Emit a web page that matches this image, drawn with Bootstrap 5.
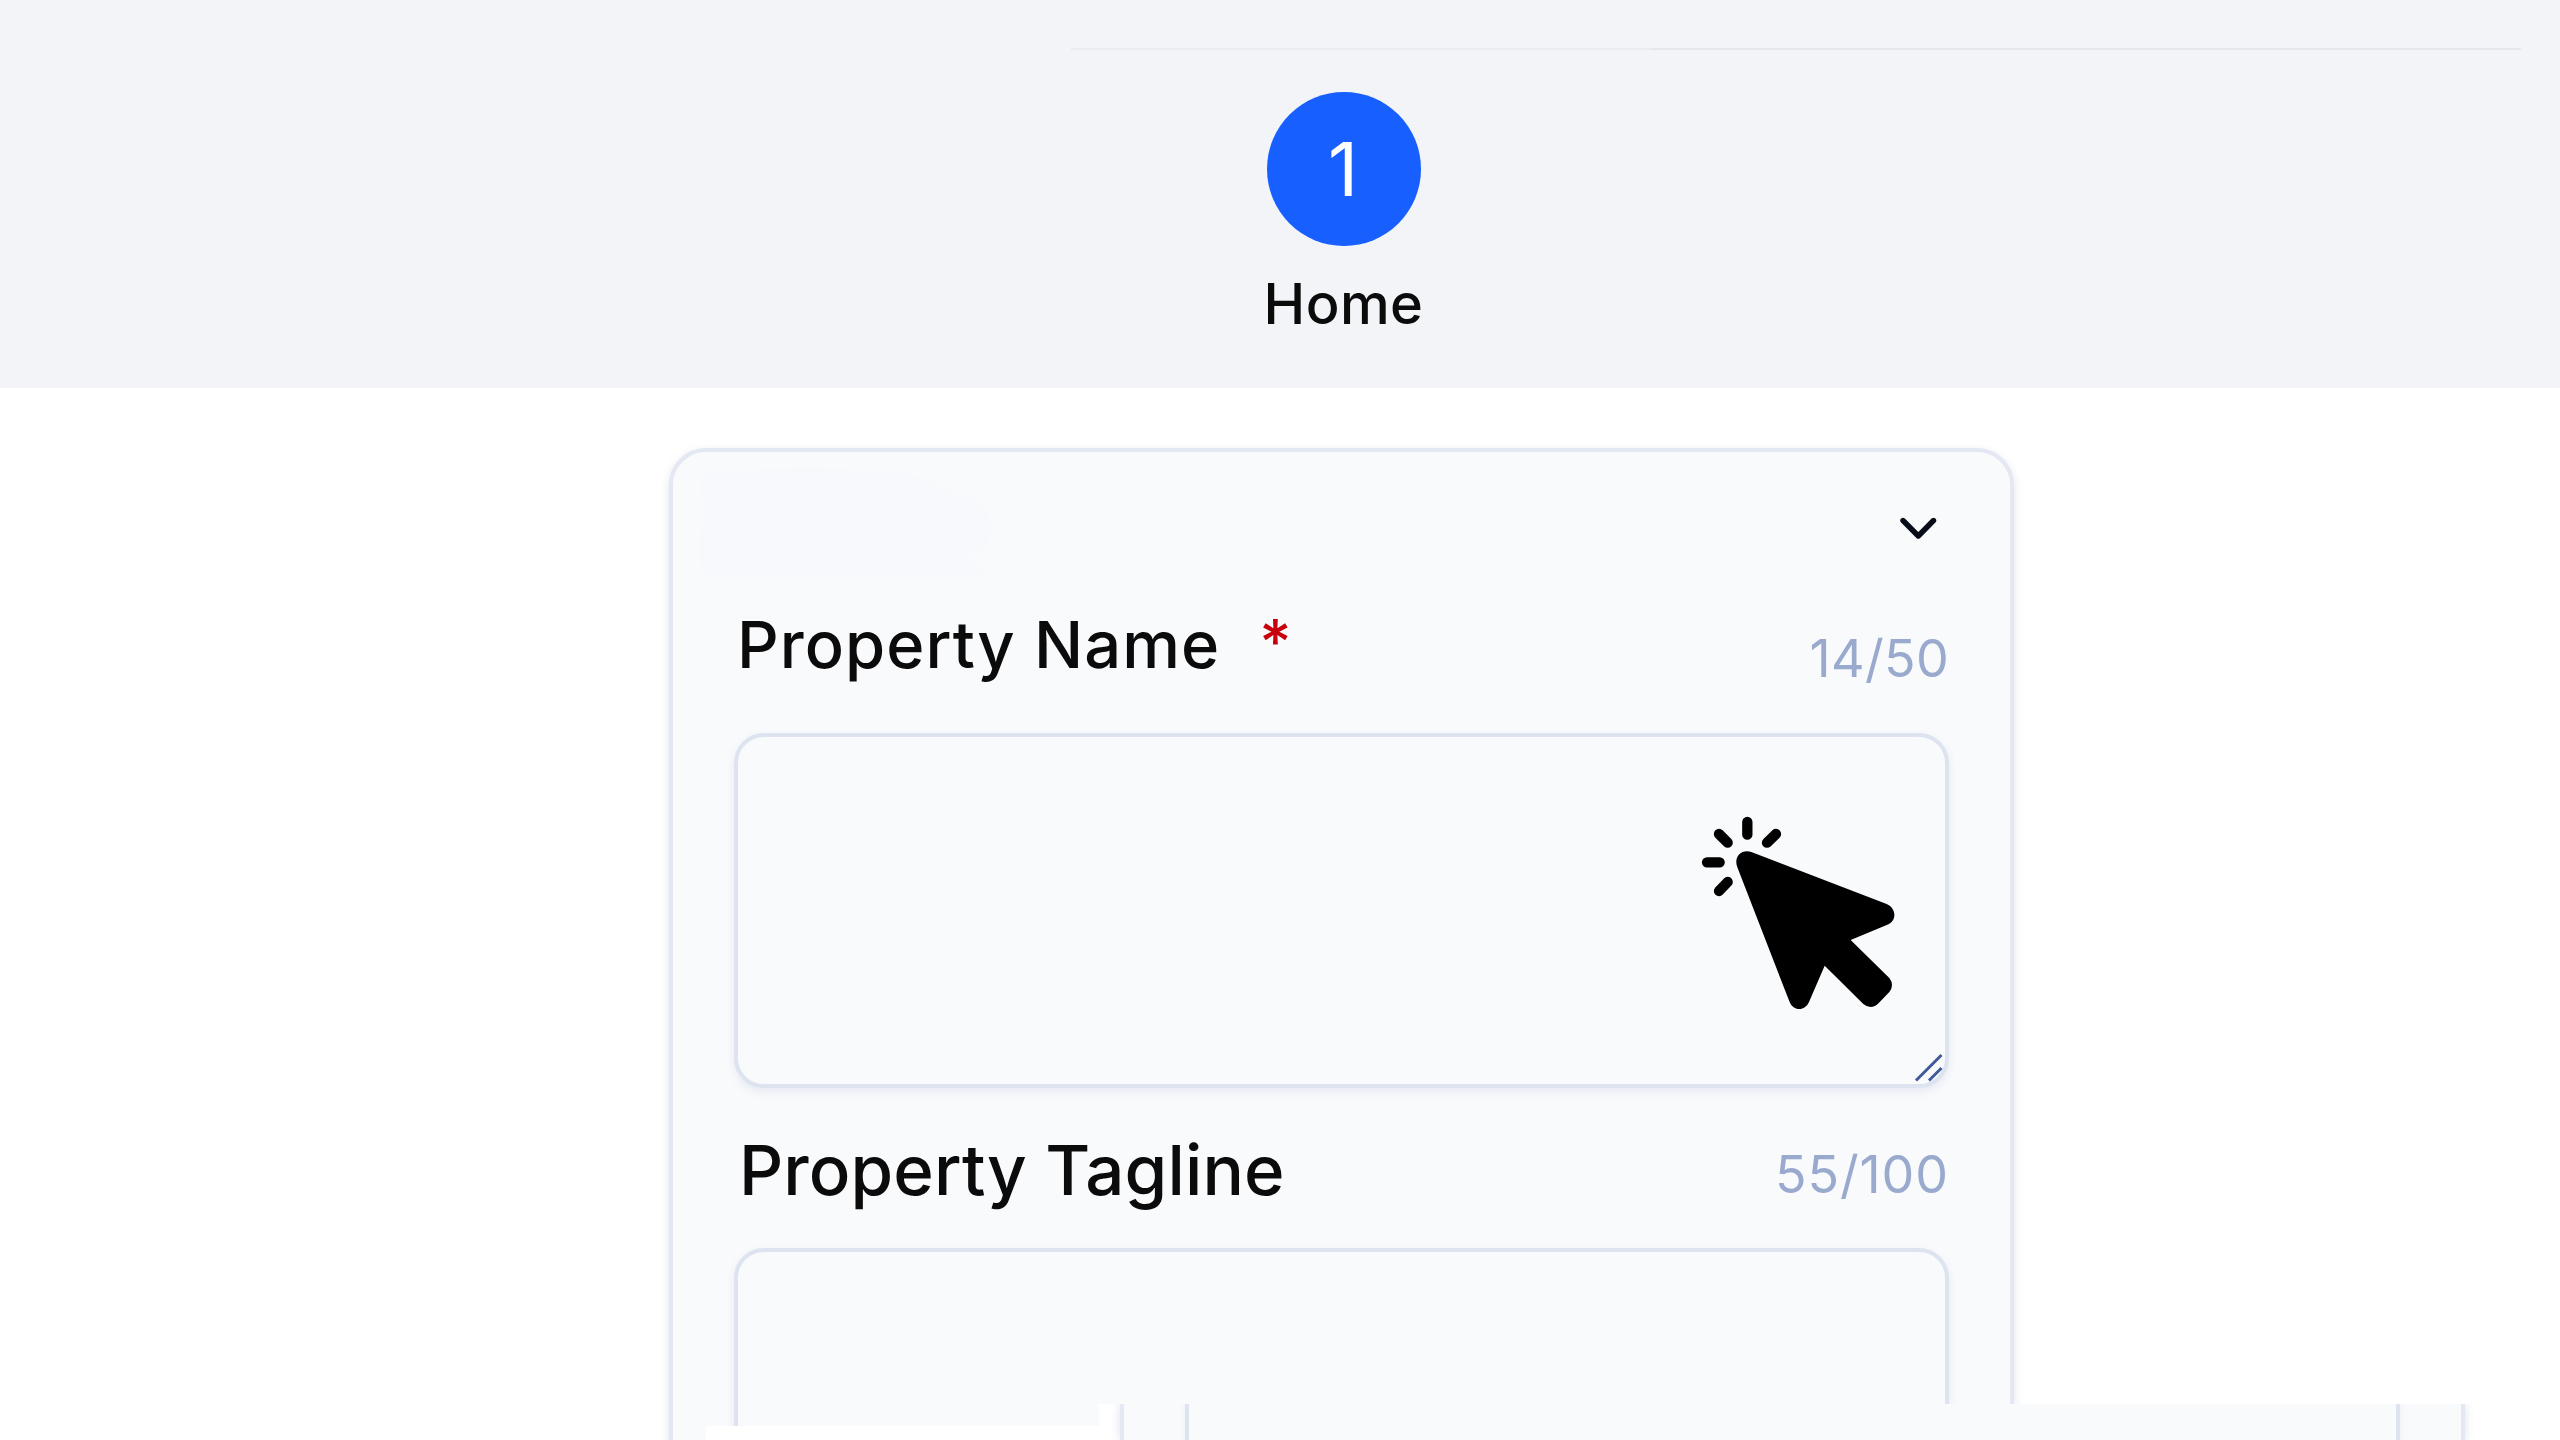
<!DOCTYPE html>
<html lang="en">
<head>
<meta charset="utf-8">
<meta name="viewport" content="width=device-width, initial-scale=1">
<title>Property details</title>
<link href="https://cdn.jsdelivr.net/npm/bootstrap@5.3.0/dist/css/bootstrap.min.css" rel="stylesheet">
<style>
  body { font-family: Inter, "Open Sans", sans-serif; color: #0b0b0c; background: #fff; }
  .stage { width: 2560px; height: 1440px; }
  .step-header { height: 388px; background: #f2f4f8; }
  .step-rule { height: 1.5px; width: 1450px; margin: 48px 0 0 1071px; background: linear-gradient(90deg, #e9ebef 40%, #e5e7eb 40%); }
  .step { width: 240px; margin: 42px 0 0 1223.5px; }
  .step-dot { width: 154px; height: 154px; background: #175fff; color: #fff; font-size: 74px; font-weight: 400; line-height: 1; padding: 0 1px 0 0; }
  .step-name { font-size: 56px; font-weight: 500; line-height: 68px; margin-top: 24px; letter-spacing: .4px; }
  .panel { width: 1345px; height: 1100px; margin: 60px 0 0 669px; padding: 0 61px; background: #f9fafc; border: 4px solid #e3e8f2; border-radius: 37px; box-shadow: 0 3px 9px rgba(70, 90, 160, .17); }
  .panel-toggle { height: 132px; padding: 60px 12px 0 0; }
  .field-head { height: 149px; padding-top: 21px; }
  .field-head.second { height: 160px; padding-top: 42px; }
  .field-label { font-size: 65px; font-weight: 500; line-height: 80px; letter-spacing: 1.05px; margin-left: 3px; }
  .second .field-label { font-size: 69px; letter-spacing: .1px; margin-left: 5px; }
  .req { color: #c8000e; font-size: 62px; font-weight: 500; margin-left: 39px; line-height: 74px; }
  .counter { font-size: 52px; font-weight: 400; line-height: 64px; color: #9aaace; }
  .c1 { margin-top: 22px; letter-spacing: .3px; }
  .c2 { margin-top: 13px; letter-spacing: .9px; }
  .entry { height: 355px; border: 4px solid #dde4ef; border-radius: 30px; background: #f9fafc; box-shadow: 0 4px 8px rgba(70, 90, 160, .10); }
  .smudge { left: 669px; top: 448px; }
  .pointer { left: 1680px; top: 800px; }
  .grip { left: 1912px; top: 1050px; }
  .lower { left: 1099px; top: 1404px; width: 1461px; height: 36px; background: #fff; padding-left: 21px; }
  .lower-panel { width: 1345px; height: 36px; background: #f9fafc; border: solid #e3e8f2; border-width: 0 4px; padding: 0 61px; box-shadow: 0 0 9px rgba(70, 90, 160, .18); }
  .lower-entry { border: solid #dde4ef; border-width: 0 4px; height: 36px; box-shadow: 0 0 6px rgba(70, 90, 160, .08); }
  .blank { left: 706px; top: 1426px; width: 393px; height: 14px; background: #fff; }
</style>
</head>
<body>
<div class="stage position-relative overflow-hidden">
  <header class="step-header d-flex flex-column align-items-start">
    <div class="step-rule"></div>
    <div class="step d-flex flex-column align-items-center">
      <div class="step-dot rounded-circle d-flex align-items-center justify-content-center"><span class="num">1</span></div>
      <div class="step-name">Home</div>
    </div>
  </header>

  <main class="panel">
    <div class="panel-toggle d-flex justify-content-end align-items-start">
      <svg width="50" height="34" viewBox="0 0 50 34" fill="none" stroke="#080c18" stroke-width="5.4" stroke-linecap="round" stroke-linejoin="round"><path d="M16 8.500 31.300 24 46.500 8.500"/></svg>
    </div>
    <div class="field-head d-flex justify-content-between align-items-start">
      <div class="d-flex"><label class="field-label" for="pname">Property Name</label><span class="req">*</span></div>
      <span class="counter c1">14/50</span>
    </div>
    <div class="entry" id="pname"></div>
    <div class="field-head second d-flex justify-content-between align-items-start">
      <label class="field-label" for="ptag">Property Tagline</label>
      <span class="counter c2">55/100</span>
    </div>
    <div class="entry" id="ptag"></div>
  </main>

  <svg class="smudge position-absolute" width="340" height="150" viewBox="0 0 340 150"><path fill="#f8f9fd" d="M37 128Q25 108 34 74V52Q22 20 60 25Q140 15 190 23Q260 22 282 46Q322 47 322 82Q320 103 300 106L318 129H37Z"/></svg>

  <svg class="grip position-absolute" width="34" height="34" viewBox="0 0 34 34" stroke="#405a98" stroke-width="3"><path d="M4 30.500 29.500 5M17 30.500 29.500 18"/></svg>

  <svg class="pointer position-absolute" width="240" height="230" viewBox="0 0 720 690">
    <path d="M214 156 620 312C650 325 651 363 622 374L512 420 628 534Q644 555 628 576L597 608Q574 632 550 612L434 497 388 604C376 635 339 635 328 604L172 202C160 171 184 146 214 156Z"/>
    <path d="M202 66V104M117 102 143 128M288 102 261 128M81 187H119M143 246 117 273" fill="none" stroke="#000" stroke-width="31" stroke-linecap="round"/>
  </svg>

  <div class="lower position-absolute overflow-hidden"><div class="lower-panel"><div class="lower-entry"></div></div></div>
  <div class="blank position-absolute"></div>
</div>
<script src="https://cdn.jsdelivr.net/npm/bootstrap@5.3.0/dist/js/bootstrap.bundle.min.js"></script>
</body>
</html>
